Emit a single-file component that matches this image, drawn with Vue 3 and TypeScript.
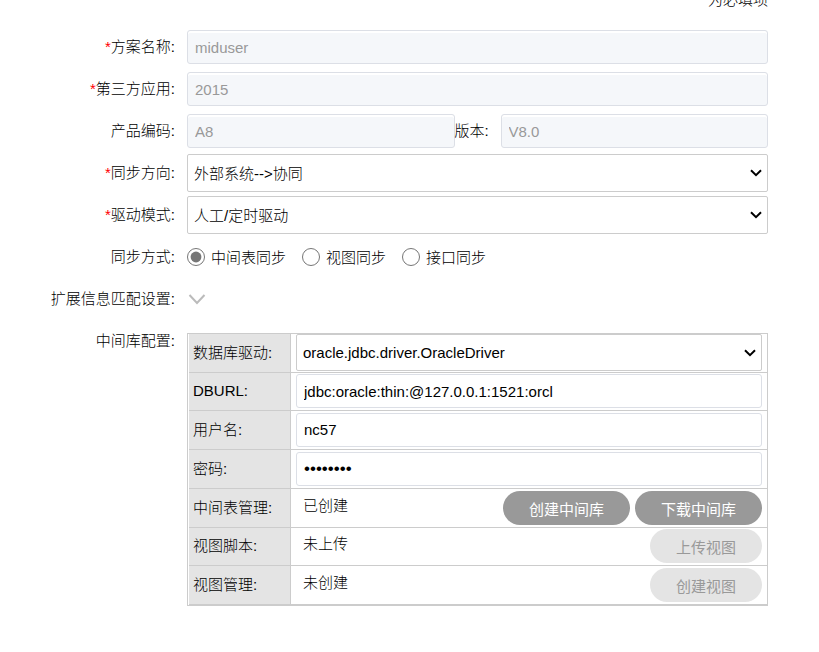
<script setup lang="ts">
import { ref } from 'vue'

const planName = ref('miduser')
const thirdParty = ref('2015')
const productCode = ref('A8')
const version = ref('V8.0')
const direction = ref('外部系统-->协同')
const driveMode = ref('人工/定时驱动')

const syncModes = ['中间表同步', '视图同步', '接口同步']
const syncMode = ref(syncModes[0])

const driver = ref('oracle.jdbc.driver.OracleDriver')
const dbUrl = ref('jdbc:oracle:thin:@127.0.0.1:1521:orcl')
const userName = ref('nc57')
const password = ref('password')

interface ManageRow {
  label: string
  status: string
  actions: string[]
  disabled: boolean
}

const manageRows: ManageRow[] = [
  { label: '中间表管理:', status: '已创建', actions: ['创建中间库', '下载中间库'], disabled: false },
  { label: '视图脚本:', status: '未上传', actions: ['上传视图'], disabled: true },
  { label: '视图管理:', status: '未创建', actions: ['创建视图'], disabled: true },
]
</script>

<template>
  <form class="form" @submit.prevent>
    <p class="hint">为必填项</p>

    <div class="row">
      <label class="label" for="plan"><i>*</i>方案名称:</label>
      <input id="plan" v-model="planName" class="text" type="text" disabled />
    </div>
    <div class="row">
      <label class="label" for="third"><i>*</i>第三方应用:</label>
      <input id="third" v-model="thirdParty" class="text" type="text" disabled />
    </div>
    <div class="row">
      <label class="label" for="code">产品编码:</label>
      <div class="pair">
        <input id="code" v-model="productCode" class="text" type="text" disabled />
        <label class="inner-label" for="version">版本:</label>
        <input id="version" v-model="version" class="text" type="text" disabled />
      </div>
    </div>
    <div class="row">
      <label class="label" for="direction"><i>*</i>同步方向:</label>
      <select id="direction" v-model="direction" class="select">
        <option>外部系统--&gt;协同</option>
      </select>
    </div>
    <div class="row">
      <label class="label" for="drive"><i>*</i>驱动模式:</label>
      <select id="drive" v-model="driveMode" class="select">
        <option>人工/定时驱动</option>
      </select>
    </div>
    <div class="row" role="radiogroup" aria-labelledby="sync-label">
      <span id="sync-label" class="label">同步方式:</span>
      <div class="radios">
        <label v-for="mode in syncModes" :key="mode" class="radio">
          <input v-model="syncMode" type="radio" name="sync" :value="mode" />
          <span>{{ mode }}</span>
        </label>
      </div>
    </div>
    <div class="row">
      <span id="ext-label" class="label">扩展信息匹配设置:</span>
      <button class="expand" type="button" aria-labelledby="ext-label">
        <svg width="20" height="14" viewBox="0 0 20 14" fill="none" stroke="#bbb" stroke-width="2">
          <path d="M2.5 3 L10 11 L17.5 3" />
        </svg>
      </button>
    </div>
    <div class="row row-top">
      <span class="label">中间库配置:</span>
      <table class="config">
        <tbody>
          <tr>
            <th scope="row"><label for="driver">数据库驱动:</label></th>
            <td>
              <select id="driver" v-model="driver" class="select">
                <option>oracle.jdbc.driver.OracleDriver</option>
              </select>
            </td>
          </tr>
          <tr>
            <th scope="row"><label for="url">DBURL:</label></th>
            <td><input id="url" v-model="dbUrl" class="text" type="text" /></td>
          </tr>
          <tr>
            <th scope="row"><label for="user">用户名:</label></th>
            <td><input id="user" v-model="userName" class="text" type="text" /></td>
          </tr>
          <tr>
            <th scope="row"><label for="pwd">密码:</label></th>
            <td><input id="pwd" v-model="password" class="text" type="password" /></td>
          </tr>
          <tr v-for="row in manageRows" :key="row.label">
            <th scope="row">{{ row.label }}</th>
            <td>
              <div class="manage">
                <span class="status">{{ row.status }}</span>
                <button
                  v-for="action in row.actions"
                  :key="action"
                  class="action"
                  type="button"
                  :disabled="row.disabled"
                >{{ action }}</button>
              </div>
            </td>
          </tr>
        </tbody>
      </table>
    </div>
  </form>
</template>

<style>
body {
  background: #fff;
}
</style>

<style scoped>
.form,
.form input,
.form select,
.form button {
  font-family: "Liberation Sans", "Noto Sans CJK SC", sans-serif;
  font-size: 15px;
  font-weight: 300;
  box-sizing: border-box;
}

.form {
  display: flex;
  flex-direction: column;
  padding-right: 51px;
  color: #000;
}

.hint {
  margin: -11px 0 15px;
  line-height: 22px;
  text-align: right;
}

.row {
  display: flex;
  align-items: center;
  gap: 12px;
  min-height: 42px;
}

.row-top {
  align-items: flex-start;
}

.label {
  flex: none;
  width: 175px;
  line-height: 42px;
  text-align: right;
  white-space: nowrap;
}

.label i {
  color: #f00;
  font-style: normal;
}

.pair {
  display: flex;
  flex: 1;
  align-items: center;
  min-width: 0;
}

.inner-label {
  flex: none;
  width: 46px;
  padding-bottom: 3px;
}

.form .text {
  flex: 1;
  width: 100%;
  min-width: 0;
  height: 34px;
  margin: 0;
  padding: 0 7px;
  border: 1px solid #dcdfe6;
  border-radius: 3px;
  background: #fff;
  color: #000;
}

.form .text:disabled {
  background: #f5f7fa;
  box-shadow: inset 0 2px 0 #fff;
  color: #999;
}

.form .text[type="password"] {
  font-size: 17px;
}

.select {
  flex: 1;
  width: 100%;
  min-width: 0;
  height: 38px;
  margin: 0;
  padding: 0 24px 0 6px;
  appearance: none;
  border: 1px solid #ccc;
  border-radius: 2px;
  background: #fff url("data:image/svg+xml,%3Csvg xmlns='http://www.w3.org/2000/svg' width='12' height='8' fill='none' stroke='%23000' stroke-width='2'%3E%3Cpath d='M1 1.2 L6 6.2 L11 1.2'/%3E%3C/svg%3E") no-repeat right 5px center;
  color: #000;
}

.radios {
  display: flex;
  gap: 16px;
}

.radio {
  display: flex;
  align-items: center;
  gap: 6px;
}

.radio span {
  padding-bottom: 2px;
}

.radio input {
  width: 18px;
  height: 18px;
  margin: 0;
  accent-color: #767676;
}

.expand {
  display: flex;
  padding: 0;
  border: 0;
  background: none;
}

.config {
  flex: 1;
  margin-top: 13px;
  padding-left: 1px;
  border: 1px solid #ccc;
  border-spacing: 0;
  table-layout: fixed;
}

.config tr {
  height: 39px;
}

.config tr:nth-child(4n + 2) {
  height: 38px;
}

.config th,
.config td {
  box-sizing: border-box;
  padding: 0 5px 1px;
  border-bottom: 1px solid #ccc;
  line-height: 22px;
}

.config th {
  width: 102px;
  padding-left: 4px;
  border-right: 1px solid #ccc;
  background: #e4e4e4;
  font-weight: 300;
  text-align: left;
  white-space: nowrap;
}

.config .text,
.config .select {
  display: block;
}

.config .select {
  height: 37px;
}

.manage {
  display: flex;
  align-items: center;
  gap: 5px;
}

.status {
  flex: 1;
  padding: 0 7px 4px;
}

.form .action {
  height: 34px;
  padding: 1px 26px 0;
  border: 0;
  border-radius: 17px;
  background: #999;
  color: #fff;
  font-weight: 400;
}

.form .action:disabled {
  background: #e4e4e4;
  color: #999;
}
</style>
